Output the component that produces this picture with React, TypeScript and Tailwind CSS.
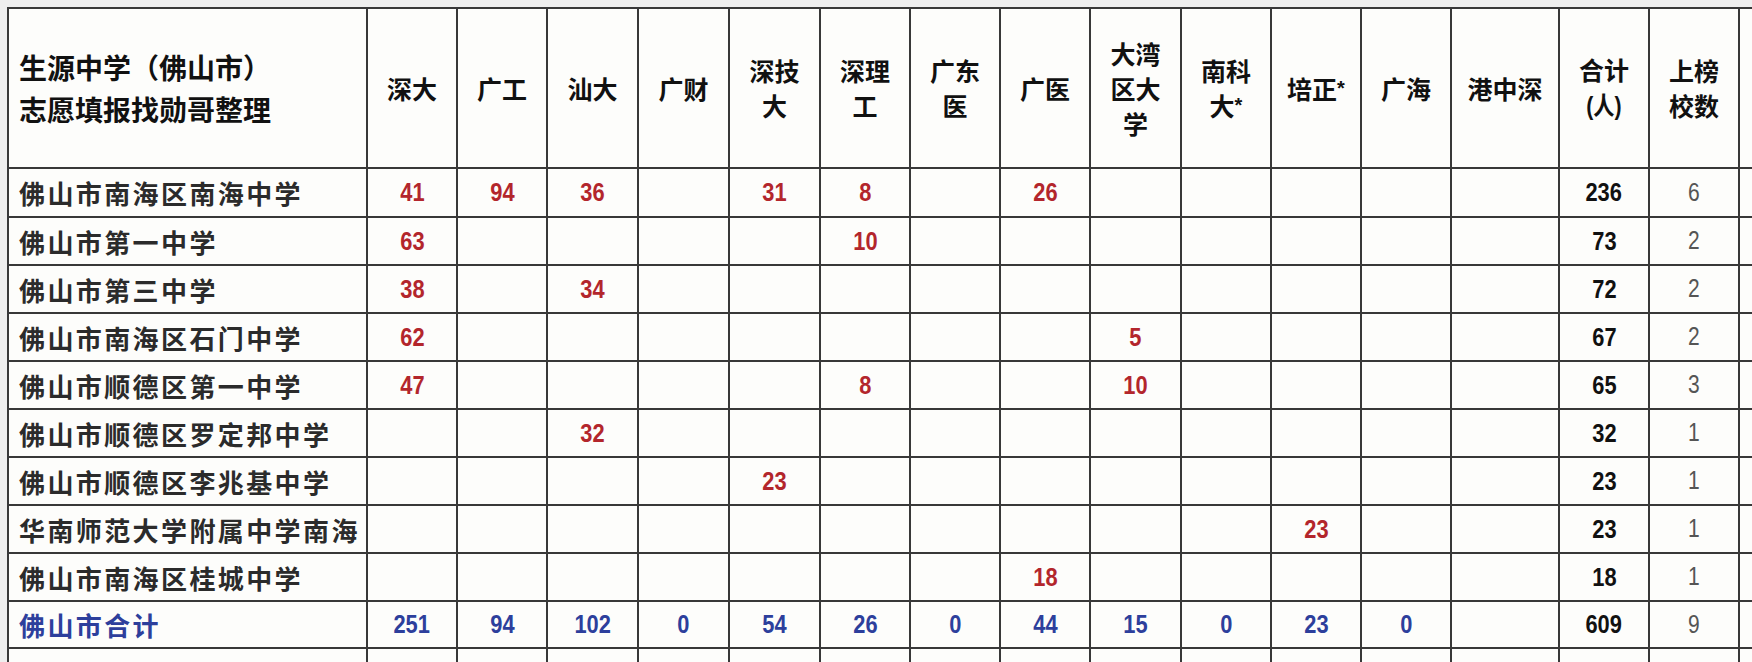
import React from 'react'

type Row = {
  name: string
  vals: (number | null)[]
  total: number
  count: number
}

const heads: string[][] = [
  ['深大'],
  ['广工'],
  ['汕大'],
  ['广财'],
  ['深技', '大'],
  ['深理', '工'],
  ['广东', '医'],
  ['广医'],
  ['大湾', '区大', '学'],
  ['南科', '大*'],
  ['培正*'],
  ['广海'],
  ['港中深'],
]

const n = null
const rows: Row[] = [
  { name: '佛山市南海区南海中学', vals: [41, 94, 36, n, 31, 8, n, 26, n, n, n, n, n], total: 236, count: 6 },
  { name: '佛山市第一中学', vals: [63, n, n, n, n, 10, n, n, n, n, n, n, n], total: 73, count: 2 },
  { name: '佛山市第三中学', vals: [38, n, 34, n, n, n, n, n, n, n, n, n, n], total: 72, count: 2 },
  { name: '佛山市南海区石门中学', vals: [62, n, n, n, n, n, n, n, 5, n, n, n, n], total: 67, count: 2 },
  { name: '佛山市顺德区第一中学', vals: [47, n, n, n, n, 8, n, n, 10, n, n, n, n], total: 65, count: 3 },
  { name: '佛山市顺德区罗定邦中学', vals: [n, n, 32, n, n, n, n, n, n, n, n, n, n], total: 32, count: 1 },
  { name: '佛山市顺德区李兆基中学', vals: [n, n, n, n, 23, n, n, n, n, n, n, n, n], total: 23, count: 1 },
  { name: '华南师范大学附属中学南海', vals: [n, n, n, n, n, n, n, n, n, n, 23, n, n], total: 23, count: 1 },
  { name: '佛山市南海区桂城中学', vals: [n, n, n, n, n, n, n, 18, n, n, n, n, n], total: 18, count: 1 },
]

const sum: (number | null)[] = [251, 94, 102, 0, 54, 26, 0, 44, 15, 0, 23, 0, n]

const cell = 'border-r-2 border-b-2 border-[#383838] flex items-center justify-center overflow-hidden'
const num = "font-['Liberation_Sans',sans-serif] font-bold text-[26px]"
const light = "font-['Liberation_Sans',sans-serif] text-[25px] text-[#555]"
const cjk = "font-['Noto_Sans_CJK_SC','Noto_Sans',sans-serif]"

// the numbers in the sheet are set in a condensed face
function Num({ v }: { v: number | null }) {
  if (v === null) return null
  return <span className="inline-block scale-x-[0.84]">{v}</span>
}

export default function App() {
  return (
    <div className="w-[1752px] h-[662px] overflow-hidden bg-[#eeeeee] pl-[7px] pt-[7px]">
      <div className="grid grid-cols-[359px_90px_90px_91px_91px_91px_90px_90px_90px_91px_90px_90px_90px_108px_90px_90px_90px] grid-rows-[160px_49px_48px_48px_48px_48px_48px_48px_48px_48px_47px_48px] w-max border-l-2 border-t-2 border-[#383838] bg-[#fdfdfb]">
        {/* header */}
        <div className={`${cell} !justify-start pl-[10px] ${cjk} font-bold text-[28px] leading-[42px] text-[#111]`}>
          <div>
            生源中学（佛山市）
            <br />
            志愿填报找勋哥整理
          </div>
        </div>
        {heads.map((h, i) => (
          <div key={i} className={`${cell} ${cjk} font-bold text-[25px] leading-[35px] text-[#111] text-center`}>
            <div>
              {h.map((l, j) => (
                <div key={j}>
                  {l.replace('*', '')}
                  {l.includes('*') && <span className="font-['Liberation_Sans',sans-serif] text-[20px] align-top">*</span>}
                </div>
              ))}
            </div>
          </div>
        ))}
        <div className={`${cell} ${cjk} font-bold text-[25px] leading-[35px] text-[#111] text-center`}>
          <div>
            合计
            <br />
            <span className="inline-block scale-x-[0.85]">
              <span className="font-['Liberation_Sans',sans-serif]">(</span>人
              <span className="font-['Liberation_Sans',sans-serif]">)</span>
            </span>
          </div>
        </div>
        <div className={`${cell} ${cjk} font-bold text-[25px] leading-[35px] text-[#111] text-center`}>
          <div>
            上榜
            <br />
            校数
          </div>
        </div>
        <div className={cell} />

        {/* school rows */}
        {rows.map((r) => (
          <React.Fragment key={r.name}>
            <div className={`${cell} !justify-start pl-[10px] ${cjk} font-semibold text-[26px] tracking-[2.4px] text-[#2b2b2b] whitespace-nowrap`}>
              {r.name}
            </div>
            {r.vals.map((v, i) => (
              <div key={i} className={`${cell} ${num} text-[#b3262c]`}>
                <Num v={v} />
              </div>
            ))}
            <div className={`${cell} ${num} text-[#111]`}>
              <Num v={r.total} />
            </div>
            <div className={`${cell} ${light}`}>
              <Num v={r.count} />
            </div>
            <div className={cell} />
          </React.Fragment>
        ))}

        {/* city total */}
        <div className={`${cell} !justify-start pl-[10px] ${cjk} font-semibold text-[26px] tracking-[2.4px] text-[#2d3f9c]`}>
          佛山市合计
        </div>
        {sum.map((v, i) => (
          <div key={i} className={`${cell} ${num} text-[#2d3f9c]`}>
            <Num v={v} />
          </div>
        ))}
        <div className={`${cell} ${num} text-[#111]`}>
          <Num v={609} />
        </div>
        <div className={`${cell} ${light}`}>
          <Num v={9} />
        </div>
        <div className={cell} />

        {/* next row, cut off at the bottom */}
        {Array.from({ length: 17 }).map((_, i) => (
          <div key={i} className={cell} />
        ))}
      </div>
    </div>
  )
}
